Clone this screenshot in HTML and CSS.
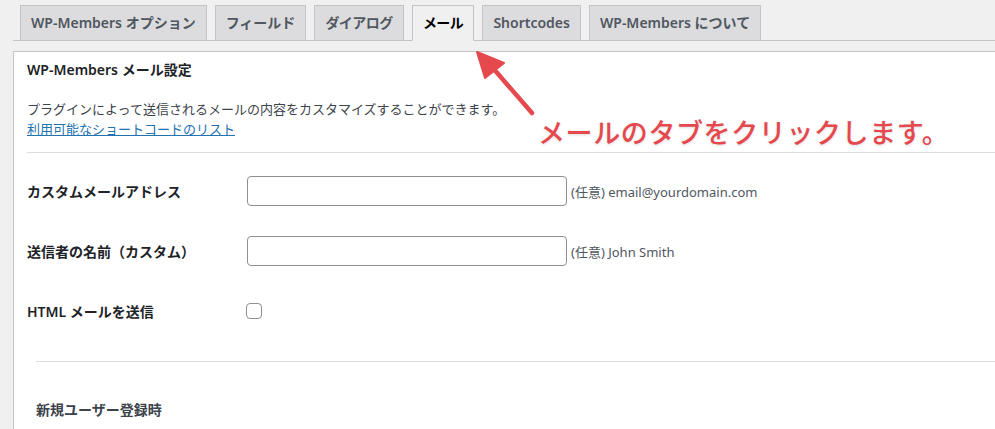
FILE: index.html
```html
<!DOCTYPE html>
<html lang="ja">
<head>
    <meta charset="UTF-8">
    <title>WP-Members メール設定</title>
    <link rel="stylesheet" href="styles.css">
</head>
<body>
    <div class="wrap">
        <!-- Tabs -->
        <nav class="nav-tabs">
            <a class="nav-tab" href="#">WP-Members オプション</a>
            <a class="nav-tab" href="#">フィールド</a>
            <a class="nav-tab tight" href="#">ダイアログ</a>
            <a class="nav-tab nav-tab-active tight" href="#">メール</a>
            <a class="nav-tab" href="#">Shortcodes</a>
            <a class="nav-tab" href="#">WP-Members について</a>
        </nav>

        <!-- Email settings panel -->
        <div class="panel">
            <h3 class="panel-title">WP-Members メール設定</h3>
            <p class="intro">
                プラグインによって送信されるメールの内容をカスタマイズすることができます。<br>
                <a href="#">利用可能なショートコードのリスト</a>
            </p>
            <hr class="rule">

            <div class="form-row">
                <label class="row-label" for="customEmail">カスタムメールアドレス</label>
                <input type="text" id="customEmail" class="text-input">
                <span class="hint">(任意) email@yourdomain.com</span>
            </div>
            <div class="form-row">
                <label class="row-label" for="senderName">送信者の名前（カスタム）</label>
                <input type="text" id="senderName" class="text-input">
                <span class="hint">(任意) John Smith</span>
            </div>
            <div class="form-row">
                <label class="row-label" for="htmlMail">HTML メールを送信</label>
                <input type="checkbox" id="htmlMail" class="check">
            </div>

            <div class="section">
                <hr class="rule">
                <h4 class="section-title">新規ユーザー登録時</h4>
            </div>
        </div>
    </div>

    <!-- Annotation -->
    <svg class="arrow" width="995" height="429" viewBox="0 0 995 429">
        <line x1="532" y1="113" x2="492" y2="67" stroke="#e5484d" stroke-width="4.5" stroke-linecap="round"/>
        <polygon points="477,52 504,63 485,78" fill="#e5484d" stroke="#e5484d" stroke-width="2" stroke-linejoin="round"/>
    </svg>
    <div class="note">メールのタブをクリックします。</div>
</body>
</html>
```

FILE: styles.css
```css
body {
    margin: 0;
    height: 429px;
    background-color: #f0f0f1;
    font-family: "Noto Sans", "Noto Sans CJK JP", sans-serif;
    color: #1d2327;
    overflow: hidden;
}
.wrap {
    padding: 5px 0 0 13px;
}
.nav-tabs {
    display: flex;
    gap: 8px;
    padding-left: 7px;
    border-bottom: 1px solid #c3c4c7;
}
.nav-tab {
    margin-bottom: -1px;
    padding: 5px 10px;
    border: 1px solid #c3c4c7;
    background-color: #dcdcde;
    color: #50575e;
    font-size: 14px;
    font-weight: 600;
    line-height: 24px;
    text-decoration: none;
    white-space: nowrap;
}
.tight {
    letter-spacing: -0.5px;
}
.nav-tab-active {
    background-color: #f0f0f1;
    border-bottom-color: #f0f0f1;
    color: #000;
}
.panel {
    margin-top: 10px;
    background-color: #fff;
    border: 1px solid #c3c4c7;
    border-right: none;
    border-bottom: none;
    padding-left: 13px;
    height: 377px;
    overflow: hidden;
}
.panel-title {
    margin: 8px 0 0;
    font-size: 14px;
    line-height: 20px;
    font-weight: 600;
}
.intro {
    margin: 19px 0 0;
    font-size: 13px;
    line-height: 20px;
    color: #3c434a;
}
.intro a {
    color: #2271b1;
}
.rule {
    margin: 0;
    border: none;
    border-top: 1px solid #dcdcde;
}
.intro + .rule {
    margin-top: 13px;
    margin-bottom: 8px;
}
.form-row {
    display: flex;
    align-items: center;
    height: 60px;
}
.row-label {
    width: 220px;
    flex-shrink: 0;
    font-size: 14px;
    font-weight: 600;
}
.text-input {
    box-sizing: border-box;
    width: 320px;
    height: 30px;
    margin: 0;
    border: 1px solid #8c8f94;
    border-radius: 4px;
}
.hint {
    margin-left: 4px;
    font-size: 13px;
    color: #50575e;
}
.check {
    appearance: none;
    box-sizing: border-box;
    width: 16px;
    height: 16px;
    margin: 0 0 0 -1px;
    border: 1px solid #8c8f94;
    border-radius: 4px;
    background: #fff;
}
.section {
    margin-top: 20px;
    padding-left: 9px;
}
.section-title {
    margin: 38px 0 0;
    font-size: 14px;
    font-weight: 600;
    line-height: 20px;
    color: #3c434a;
}
.arrow {
    position: absolute;
    left: 0;
    top: 0;
}
.note {
    position: absolute;
    left: 538px;
    top: 114px;
    font-size: 27px;
    font-weight: 500;
    line-height: 38px;
    color: #e5484d;
    letter-spacing: 0.6px;
    text-shadow: 0 1px 3px rgba(0, 0, 0, 0.15);
}
```
